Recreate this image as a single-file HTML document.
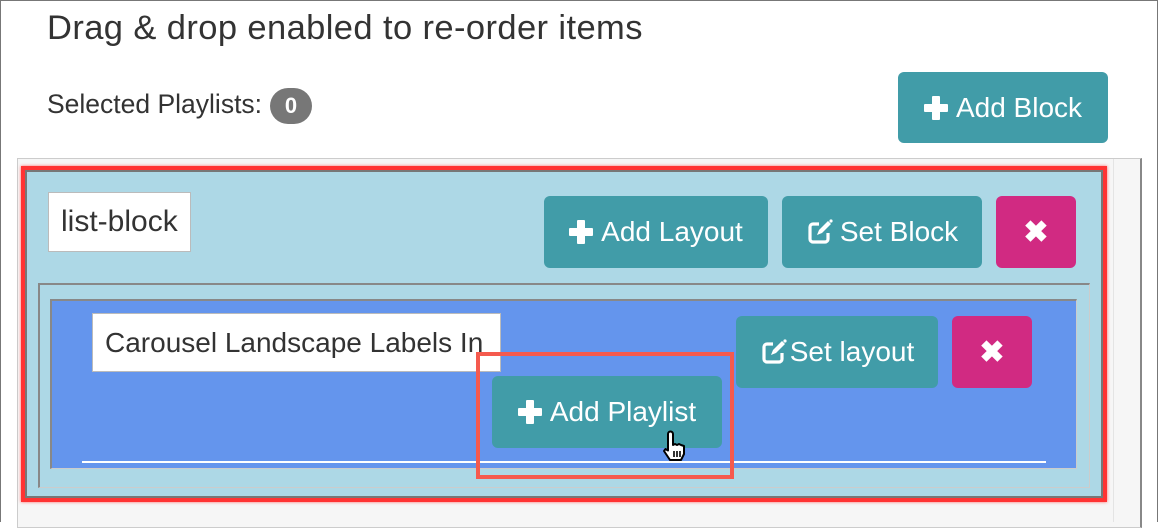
<!DOCTYPE html>
<html><head><meta charset="utf-8"><style>
*{box-sizing:border-box;margin:0;padding:0}
body{width:1158px;height:522px;overflow:hidden;background:#fff;font-family:"Liberation Sans",sans-serif;color:#333;position:relative}
.a{position:absolute}
.btn{position:absolute;background:#419ca8;color:#fff;border-radius:6px;display:flex;align-items:center;justify-content:center;font-size:28px;white-space:nowrap}
.x{background:#d12a82}
.plus{display:inline-block;position:relative;width:24px;height:24px;margin-right:8px}
.plus:before{content:"";position:absolute;left:8px;top:0;width:8px;height:24px;background:#fff;border-radius:1px}
.plus:after{content:"";position:absolute;left:0;top:8px;width:24px;height:8px;background:#fff;border-radius:1px}
.inp{position:absolute;background:#fff;border:1px solid #bbb;color:#333;display:flex;align-items:center;padding-left:12px;overflow:hidden;white-space:nowrap}
</style></head><body>
<div class="a" style="left:0;top:0;width:1158px;height:522px;border:1px solid #777;border-bottom:none"></div>
<div class="a" style="left:47px;top:9px;font-size:34.5px;letter-spacing:0.4px;color:#333">Drag &amp; drop enabled to re-order items</div>
<div class="a" style="left:47px;top:89px;font-size:26.5px;color:#333">Selected Playlists:</div>
<div class="a" style="left:270px;top:88px;width:42px;height:36px;border-radius:18px;background:#777;color:#fff;font-size:22px;font-weight:bold;text-align:center;line-height:36px">0</div>
<div class="btn" style="left:898px;top:72px;width:210px;height:71px"><span class="plus"></span>Add Block</div>

<div class="a" style="left:17px;top:158px;width:1125px;height:370px;background:#f6f6f6;border:1px solid #ccc;border-right:2px solid #888"></div>
<div class="a" style="left:1113px;top:159px;width:1px;height:363px;background:#e4e4e4"></div>
<div class="a" style="left:21px;top:166px;width:1086px;height:336px;border:4px solid #f33;box-shadow:0 0 3px #f66"></div>
<div class="a" style="left:25px;top:170px;width:1078px;height:328px;background:#add8e6;border:2px solid #777"></div>

<div class="inp" style="left:48px;top:192px;width:143px;height:60px;font-size:30px">list-block</div>
<div class="btn" style="left:544px;top:196px;width:224px;height:72px"><span class="plus"></span>Add Layout</div>
<div class="btn" style="left:782px;top:196px;width:200px;height:72px"><svg width="28" height="28" viewBox="0 0 28 28" style="margin-right:6px"><path d="M13 6H7a3 3 0 0 0-3 3v12a3 3 0 0 0 3 3h12a3 3 0 0 0 3-3v-6" fill="none" stroke="#fff" stroke-width="3.2"/><path d="M11 17l2-5 9-9 3 3-9 9z" fill="#fff"/><circle cx="25" cy="3" r="1.6" fill="#fff"/></svg>Set Block</div>
<div class="btn x" style="left:996px;top:196px;width:80px;height:72px;font-size:30px;font-weight:bold">✖</div>

<div class="a" style="left:38px;top:283px;width:1052px;height:205px;border:1px solid #ccc;border-top:2px solid #888;border-left:2px solid #888"></div>
<div class="a" style="left:50px;top:299px;width:1027px;height:170px;background:#6495ed;border-top:2px solid #888;border-left:2px solid #888;border-right:1px solid #ccc;border-bottom:1px solid #ccc"></div>
<div class="a" style="left:82px;top:461px;width:964px;height:2px;background:#fff"></div>
<div class="inp" style="left:92px;top:313px;width:409px;height:59px;font-size:28px">Carousel Landscape Labels In</div>
<div class="btn" style="left:736px;top:316px;width:202px;height:72px"><svg width="28" height="28" viewBox="0 0 28 28" style="margin-right:2px"><path d="M13 6H7a3 3 0 0 0-3 3v12a3 3 0 0 0 3 3h12a3 3 0 0 0 3-3v-6" fill="none" stroke="#fff" stroke-width="3.2"/><path d="M11 17l2-5 9-9 3 3-9 9z" fill="#fff"/><circle cx="25" cy="3" r="1.6" fill="#fff"/></svg>Set layout</div>
<div class="btn x" style="left:952px;top:316px;width:80px;height:72px;font-size:30px;font-weight:bold">✖</div>
<div class="btn" style="left:492px;top:376px;width:230px;height:72px"><span class="plus"></span>Add Playlist</div>
<div class="a" style="left:476px;top:352px;width:258px;height:127px;border:4px solid #f55a4e"></div>
<svg class="a" style="left:660px;top:430px" width="34" height="34" viewBox="0 0 34 34"><path d="M8 4a2.5 2.5 0 0 1 5 0v11l2-1 2 1 2-1 2 1 3 1v8l-3 6H10l-6-9 1.5-2 2.5 1.5z" fill="#fff" stroke="#000" stroke-width="2" stroke-linejoin="round"/><path d="M14 21v6M17 21v6M20 21v6" stroke="#000" stroke-width="1.6"/></svg>
</body></html>
